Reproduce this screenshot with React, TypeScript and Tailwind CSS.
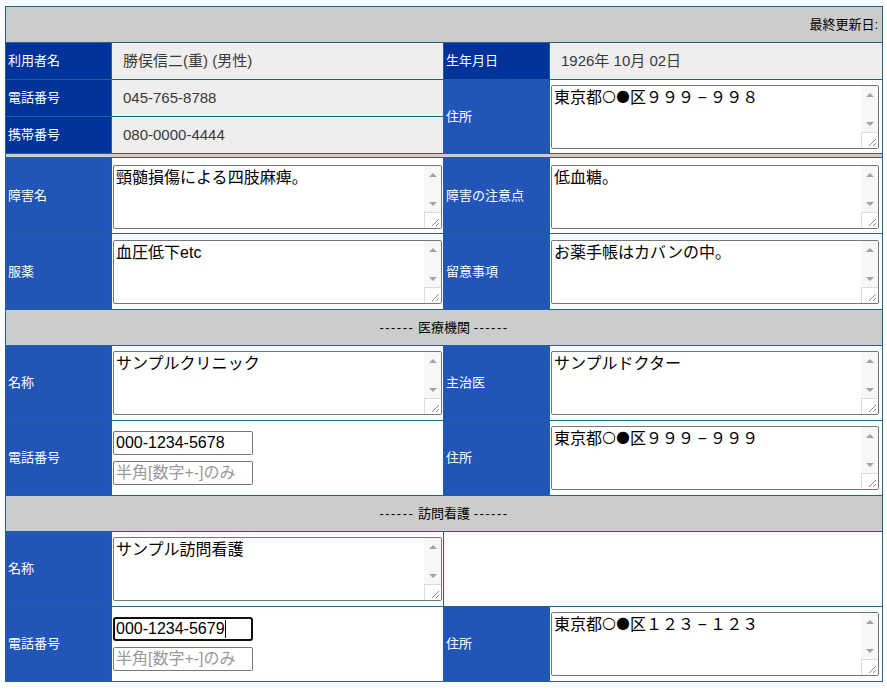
import React from "react";

const FONT = { fontFamily: '"Liberation Sans", "Noto Sans CJK JP", sans-serif' };
const SHAPE = { fontFamily: '"DejaVu Sans", "Noto Sans CJK JP", sans-serif' };

function Scrollbar() {
  return (
    <div className="absolute right-0 top-0 bottom-0 w-[17px] flex flex-col bg-[#f7f7f7]">
      <div className="h-[17px] flex items-center justify-center">
        <div className="w-0 h-0 border-l-[4px] border-r-[4px] border-b-[4px] border-l-transparent border-r-transparent border-b-[#a3a3a3]" />
      </div>
      <div className="flex-1" />
      <div className="h-[17px] flex items-center justify-center">
        <div className="w-0 h-0 border-l-[4px] border-r-[4px] border-t-[4px] border-l-transparent border-r-transparent border-t-[#a3a3a3]" />
      </div>
      <div className="h-[16px] bg-white border-l border-t border-[#dcdcdc] relative">
        <svg width="15" height="15" viewBox="0 0 15 15" className="absolute right-0 bottom-0">
          <line x1="13" y1="6" x2="6" y2="13" stroke="#8a8a8a" strokeWidth="1" />
          <line x1="13" y1="10" x2="10" y2="13" stroke="#8a8a8a" strokeWidth="1" />
        </svg>
      </div>
    </div>
  );
}

function renderText(text: string): React.ReactNode {
  return Array.from(text).map((ch, i) => {
    if (ch === "○" || ch === "●") {
      return (
        <span key={i} className="relative -top-[2px] inline-block w-[14px] text-center text-[16px] leading-[22px] align-top" style={SHAPE}>
          {ch}
        </span>
      );
    }
    if (ch === "－") {
      return (
        <span key={i} className="inline-block w-[16px] text-center align-top">
          −
        </span>
      );
    }
    return <React.Fragment key={i}>{ch}</React.Fragment>;
  });
}

function TArea({ text, w }: { text: string; w: string }) {
  return (
    <div className={`relative ${w} h-[64px] border border-[#767676] rounded-[2px] bg-white overflow-hidden`}>
      <div className="px-[2px] pt-[1px] text-[16px] leading-[22px] text-black whitespace-pre" style={FONT}>
        {renderText(text)}
      </div>
      <Scrollbar />
    </div>
  );
}

function Inputs({ value, focused }: { value: string; focused?: boolean }) {
  return (
    <div className="flex flex-col gap-[6px] h-full justify-center pl-px">
      <div
        className={
          focused
            ? "w-[140px] h-[24px] border-2 border-[#101010] rounded-[3px] pl-px flex items-center text-[16px] text-black bg-white"
            : "w-[140px] h-[24px] border border-[#767676] rounded-[2px] pl-[2px] flex items-center text-[16px] text-black bg-white"
        }
        style={FONT}
      >
        <span>{value}</span>
        {focused && <span className="inline-block w-px h-[18px] bg-black" />}
      </div>
      <div
        className="w-[140px] h-[24px] border border-[#767676] rounded-[2px] pl-[2px] flex items-center text-[16px] text-[#9a9a9a] bg-white whitespace-nowrap overflow-hidden"
        style={FONT}
      >
        半角[数字+-]のみ
      </div>
    </div>
  );
}

function DarkLabel({ children }: { children: React.ReactNode }) {
  return (
    <div className="bg-[#003399] text-white text-[13px] flex items-center pl-[2px]" style={FONT}>
      {children}
    </div>
  );
}

function Label({ children, className = "" }: { children: React.ReactNode; className?: string }) {
  return (
    <div className={`bg-[#2155b8] text-white text-[13px] flex items-center pl-[2px] ${className}`} style={FONT}>
      {children}
    </div>
  );
}

function Val({ children }: { children: React.ReactNode }) {
  return (
    <div className="bg-[#eeeeee] text-[#3a3a3a] text-[15px] flex items-center pl-[11px]" style={FONT}>
      {children}
    </div>
  );
}

function TCell({ text, w, className = "", pt = "pt-[5px]" }: { text: string; w: string; className?: string; pt?: string }) {
  return (
    <div className={`bg-white pl-px ${pt} ${className}`}>
      <TArea text={text} w={w} />
    </div>
  );
}

function Section({ title }: { title: string }) {
  return (
    <div className="col-span-4 bg-[#cccccc] flex items-center justify-center text-[13px] text-black" style={FONT}>
      <span className="tracking-[1.5px]">------</span>
      <span>&nbsp;{title}&nbsp;</span>
      <span className="tracking-[1.5px]">------</span>
    </div>
  );
}

export default function App() {
  return (
    <div className="bg-white min-h-[690px] pt-[6px] pl-[5px]">
      <div className="grid w-max grid-cols-[105px_331px_105px_332px] grid-rows-[35px_36px_36px_36px_3px_75px_75px_35px_74px_74px_35px_74px_74px] gap-px p-px bg-[#21628f]">
        <div className="col-span-4 bg-[#cccccc] flex items-center justify-end pr-[4px] text-[13px] text-black" style={FONT}>
          最終更新日:
        </div>

        <DarkLabel>利用者名</DarkLabel>
        <Val>勝俣信二(重) (男性)</Val>
        <DarkLabel>生年月日</DarkLabel>
        <Val>1926年 10月 02日</Val>

        <DarkLabel>電話番号</DarkLabel>
        <Val>045-765-8788</Val>
        <Label className="row-span-2">住所</Label>
        <TCell className="row-span-2" text="東京都○●区９９９－９９８" w="w-[328px]" />

        <DarkLabel>携帯番号</DarkLabel>
        <Val>080-0000-4444</Val>

        <div className="col-span-4 bg-[#cccccc]" />

        <Label>障害名</Label>
        <TCell text="頸髄損傷による四肢麻痺。" w="w-[329px]" pt="pt-[7px]" />
        <Label>障害の注意点</Label>
        <TCell text="低血糖。" w="w-[328px]" pt="pt-[7px]" />

        <Label>服薬</Label>
        <TCell text="血圧低下etc" w="w-[329px]" pt="pt-[6px]" />
        <Label>留意事項</Label>
        <TCell text="お薬手帳はカバンの中。" w="w-[328px]" pt="pt-[6px]" />

        <Section title="医療機関" />

        <Label>名称</Label>
        <TCell text="サンプルクリニック" w="w-[329px]" />
        <Label>主治医</Label>
        <TCell text="サンプルドクター" w="w-[328px]" />

        <Label>電話番号</Label>
        <div className="bg-white">
          <Inputs value="000-1234-5678" />
        </div>
        <Label>住所</Label>
        <TCell text="東京都○●区９９９－９９９" w="w-[328px]" />

        <Section title="訪問看護" />

        <Label>名称</Label>
        <TCell text="サンプル訪問看護" w="w-[329px]" />
        <div className="col-span-2 bg-white" />

        <Label>電話番号</Label>
        <div className="bg-white">
          <Inputs value="000-1234-5679" focused />
        </div>
        <Label>住所</Label>
        <TCell text="東京都○●区１２３－１２３" w="w-[328px]" />
      </div>
    </div>
  );
}
